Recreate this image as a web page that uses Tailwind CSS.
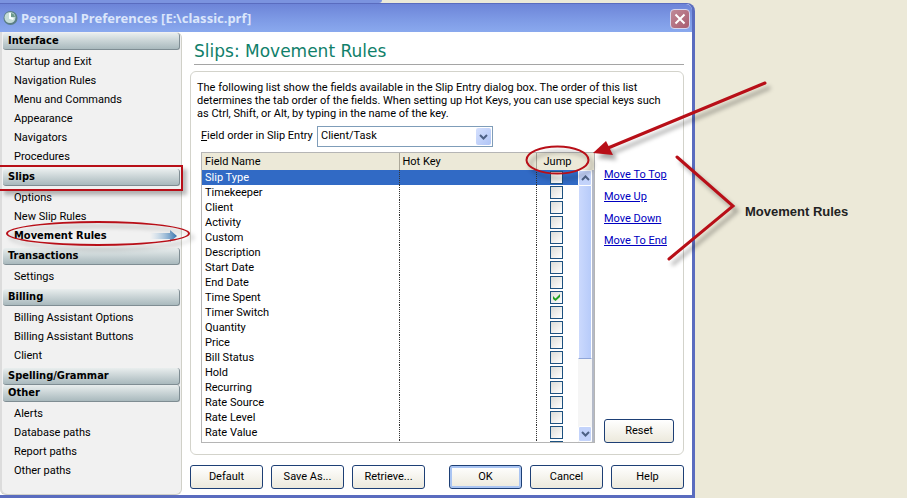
<!DOCTYPE html>
<html lang="en">
<head>
    <meta charset="UTF-8">
    <meta name="viewport" content="width=device-width, initial-scale=1.0">
    <title>Personal Preferences</title>
    <script src="https://cdn.jsdelivr.net/npm/@tailwindcss/browser@4"></script>
</head>
<body class="bg-[#ece9d8] font-[Roboto,sans-serif] text-[11px] text-black">

<div class="relative flex min-h-screen flex-col overflow-hidden">

    <!-- Edge of the window behind -->
    <div class="h-[3px] w-[382px] rounded-br bg-[#7b93df]"></div>

    <div class="flex flex-1">

        <!-- Dialog -->
        <div class="flex flex-1 flex-col rounded-tr-lg border-t border-r-[3px] border-b-[3px] border-[#5a6cbf] bg-white">

            <!-- Title bar -->
            <header class="flex h-7 items-center rounded-tr-md bg-linear-to-b from-[#6d84d8] via-[#7c98e4] to-[#8aa9ee] pr-[2px] pl-[3px]">
                <svg class="size-4" viewBox="0 0 16 16">
                    <circle cx="7.5" cy="8" r="7" fill="#5b7f86"/>
                    <circle cx="7" cy="7.500" r="5.500" fill="#c4dcd8"/>
                    <path d="M7 3v5l3.500 1" fill="none" stroke="#f8ffff" stroke-width="2"/>
                    <path d="M8 3a5 5 0 0 1 4 4l-4 0z" fill="#6d9a8c"/>
                </svg>
                <h1 class="ml-[2px] flex-1 pt-[2px] font-['Noto_Sans',sans-serif] text-[13px] font-bold text-[#dbe6fb]">Personal Preferences [E:\classic.prf]</h1>
                <button aria-label="Close" class="mt-[2px] grid size-5 place-items-center rounded-sm border border-[#d5d6ee] bg-linear-to-br from-[#c08a98] to-[#a95c70]">
                    <svg class="size-3" viewBox="0 0 12 12"><path d="M1.500 1.500l9 9M10.500 1.500l-9 9" stroke="#fff" stroke-width="2"/></svg>
                </button>
            </header>

            <div class="flex flex-1">

                <!-- Sidebar -->
                <nav class="w-[182px] rounded-r-md rounded-b-md border-r border-b border-[#d0d0c8] bg-[#f1f1f1] pt-px pr-px pb-3 pl-[3px] shadow-[inset_2px_0_0_#dcdcdc]">
                    <h2 class="h-[17px] rounded-[3px] border-r border-b border-[#7f8d93] bg-linear-to-b from-[#e9eeee] to-[#a9b9bd] pl-[5px] font-['DejaVu_Sans_Condensed','DejaVu_Sans',sans-serif] leading-4 font-bold">Interface</h2>
                    <ul class="mt-[2px] mb-[3px] pl-[11px] leading-[19px]">
                        <li><a href="#">Startup and Exit</a></li>
                        <li><a href="#">Navigation Rules</a></li>
                        <li><a href="#">Menu and Commands</a></li>
                        <li><a href="#">Appearance</a></li>
                        <li><a href="#">Navigators</a></li>
                        <li><a href="#">Procedures</a></li>
                    </ul>
                    <div class="relative">
                        <h2 class="h-[17px] rounded-[3px] border-r border-b border-[#7f8d93] bg-linear-to-b from-[#e9eeee] to-[#a9b9bd] pl-[5px] font-['DejaVu_Sans_Condensed','DejaVu_Sans',sans-serif] leading-4 font-bold">Slips</h2>
                        <!-- Highlight box -->
                        <div class="pointer-events-none absolute -top-1 -right-[3px] -bottom-[5px] -left-[3px] border-y-2 border-r-2 border-[#b80f18] shadow-[4px_4px_4px_#0004]"></div>
                    </div>
                    <ul class="mt-[2px] mb-[3px] pl-[11px] leading-[19px]">
                        <li><a href="#">Options</a></li>
                        <li><a href="#">New Slip Rules</a></li>
                        <li class="relative">
                            <a href="#" class="flex items-center justify-between pr-[2px] font-['DejaVu_Sans_Condensed','DejaVu_Sans',sans-serif] font-bold">
                                Movement Rules
                                <svg class="h-3 w-7" viewBox="0 0 28 12">
                                    <defs>
                                        <linearGradient id="fade"><stop offset="0" stop-color="#9cc4e4" stop-opacity="0"/><stop offset="1" stop-color="#3674b0"/></linearGradient>
                                    </defs>
                                    <path d="M0 3h20V0l7 6-7 6V9H0z" fill="url(#fade)"/>
                                </svg>
                            </a>
                            <div class="pointer-events-none absolute -top-[5px] -right-[10px] h-[25px] w-[184px] rounded-[50%] border-2 border-[#b80f18] drop-shadow-[4px_4px_2px_#0004]"></div>
                        </li>
                    </ul>
                    <h2 class="h-[17px] rounded-[3px] border-r border-b border-[#7f8d93] bg-linear-to-b from-[#e9eeee] to-[#a9b9bd] pl-[5px] font-['DejaVu_Sans_Condensed','DejaVu_Sans',sans-serif] leading-4 font-bold">Transactions</h2>
                    <ul class="mt-[2px] mb-[3px] pl-[11px] leading-[19px]">
                        <li><a href="#">Settings</a></li>
                    </ul>
                    <h2 class="h-[17px] rounded-[3px] border-r border-b border-[#7f8d93] bg-linear-to-b from-[#e9eeee] to-[#a9b9bd] pl-[5px] font-['DejaVu_Sans_Condensed','DejaVu_Sans',sans-serif] leading-4 font-bold">Billing</h2>
                    <ul class="mt-[2px] mb-[3px] pl-[11px] leading-[19px]">
                        <li><a href="#">Billing Assistant Options</a></li>
                        <li><a href="#">Billing Assistant Buttons</a></li>
                        <li><a href="#">Client</a></li>
                    </ul>
                    <h2 class="h-[17px] rounded-[3px] border-r border-b border-[#7f8d93] bg-linear-to-b from-[#e9eeee] to-[#a9b9bd] pl-[5px] font-['DejaVu_Sans_Condensed','DejaVu_Sans',sans-serif] leading-4 font-bold">Spelling/Grammar</h2>
                    <h2 class="h-[17px] rounded-[3px] border-r border-b border-[#7f8d93] bg-linear-to-b from-[#e9eeee] to-[#a9b9bd] pl-[5px] font-['DejaVu_Sans_Condensed','DejaVu_Sans',sans-serif] leading-4 font-bold">Other</h2>
                    <ul class="mt-[2px] pl-[11px] leading-[19px]">
                        <li><a href="#">Alerts</a></li>
                        <li><a href="#">Database paths</a></li>
                        <li><a href="#">Report paths</a></li>
                        <li><a href="#">Other paths</a></li>
                    </ul>
                </nav>

                <!-- Content -->
                <main class="flex flex-1 flex-col pr-2 pb-[6px] pl-2">
                    <h2 class="ml-1 border-b border-[#a5a5a5] pt-2 pb-[2px] font-['DejaVu_Sans',sans-serif] text-[17px] leading-[22px] text-[#10806a]">Slips: Movement Rules</h2>

                    <section class="mt-[6px] flex-1 rounded-md border border-[#d3d3cb] pt-[9px] pr-[9px] pb-[9px] pl-[10px]">
                        <p class="-ml-1 max-w-[470px] leading-[13px]">The following list show the fields available in the Slip Entry dialog box. The order of this list<br>determines the tab order of the fields. When setting up Hot Keys, you can use special keys such<br>as Ctrl, Shift, or Alt, by typing in the name of the key.</p>

                        <div class="mt-[6px] flex items-center">
                            <label for="order" class="w-[116px] whitespace-nowrap"><u>F</u>ield order in Slip Entry</label>
                            <div class="relative w-44">
                                <select id="order" class="block h-[21px] w-full appearance-none border border-[#7f9db9] bg-white pl-[3px]">
                                    <option>Client/Task</option>
                                </select>
                                <span class="pointer-events-none absolute top-[2px] right-[2px] grid h-[17px] w-[15px] place-items-center rounded-xs bg-linear-to-br from-[#d5e0fd] to-[#b0c5f6]">
                                    <svg class="h-[6px] w-[9px]" viewBox="0 0 9 6"><path d="M1 1l3.500 3.500L8 1" fill="none" stroke="#4d6185" stroke-width="2"/></svg>
                                </span>
                            </div>
                        </div>

                        <div class="mt-[5px] flex gap-[9px]">
                            <!-- Field list -->
                            <div class="relative h-[291px] flex-1 overflow-hidden border border-[#b5b5b5]">
                                <table class="w-full table-fixed border-collapse text-left">
                                    <thead class="bg-[#ece9d8]">
                                        <tr class="h-[17px] leading-[17px]">
                                            <th class="border-r border-[#aca899] pl-[3px] font-normal">Field Name</th>
                                            <th class="w-[137px] border-r border-[#aca899] pl-[3px] font-normal">Hot Key</th>
                                            <th class="w-[41px] pl-[7px] font-normal">Jump</th>
                                            <th class="w-[17px]"></th>
                                        </tr>
                                    </thead>
                                    <tbody id="fields"></tbody>
                                </table>
                                <!-- Scroll bar -->
                                <div class="absolute top-[17px] right-0 bottom-0 flex w-4 flex-col border-r-2 border-[#b4bac8] bg-[#f5f5f5]">
                                    <span class="grid h-4 place-items-center rounded-xs border border-white bg-[#c3d3fb]">
                                        <svg class="h-[6px] w-[9px]" viewBox="0 0 9 6"><path d="M1 5l3.500-3.500L8 5" fill="none" stroke="#4d6185" stroke-width="2"/></svg>
                                    </span>
                                    <span class="h-[173px] border-x border-b border-x-white border-b-[#8fa5d8] bg-linear-to-r from-[#cbd9fd] to-[#b7cbfa]"></span>
                                    <span class="mt-auto grid h-4 place-items-center rounded-xs border border-white bg-[#c3d3fb]">
                                        <svg class="h-[6px] w-[9px]" viewBox="0 0 9 6"><path d="M1 1l3.500 3.500L8 1" fill="none" stroke="#4d6185" stroke-width="2"/></svg>
                                    </span>
                                </div>
                            </div>

                            <div class="flex w-[70px] flex-col pt-3 leading-[22px] whitespace-nowrap">
                                <a href="#" class="text-[#0000c0] underline">Move To Top</a>
                                <a href="#" class="text-[#0000c0] underline">Move Up</a>
                                <a href="#" class="text-[#0000c0] underline">Move Down</a>
                                <a href="#" class="text-[#0000c0] underline">Move To End</a>
                                <button class="mt-auto h-6 rounded-[3px] border border-[#1d3f75] bg-linear-to-b from-white to-[#ece9dc] leading-[22px]">Reset</button>
                            </div>
                        </div>
                    </section>

                    <div class="mt-[10px] flex gap-2">
                        <button class="h-6 w-[73px] rounded-[3px] border border-[#1d3f75] bg-linear-to-b from-white to-[#ece9dc]">Default</button>
                        <button class="h-6 w-[73px] rounded-[3px] border border-[#1d3f75] bg-linear-to-b from-white to-[#ece9dc]">Save As...</button>
                        <button class="h-6 w-[73px] rounded-[3px] border border-[#1d3f75] bg-linear-to-b from-white to-[#ece9dc]">Retrieve...</button>
                        <button class="ml-auto h-6 w-[73px] rounded-[3px] border border-[#1d3f75] bg-linear-to-b from-white to-[#ece9dc] shadow-[inset_0_0_0_2px_#a9c4f2]">OK</button>
                        <button class="h-6 w-[73px] rounded-[3px] border border-[#1d3f75] bg-linear-to-b from-white to-[#ece9dc]">Cancel</button>
                        <button class="h-6 w-[73px] rounded-[3px] border border-[#1d3f75] bg-linear-to-b from-white to-[#ece9dc]">Help</button>
                    </div>
                </main>
            </div>
        </div>

        <!-- Callout text -->
        <aside class="w-[212px] pt-[200px] pl-[50px] font-['Liberation_Sans',Arial,sans-serif] text-[13px] leading-[18px] font-bold text-[#222]">Movement Rules</aside>
    </div>

    <!-- Callout lines, anchored to the right edge like the list they point at -->
    <svg class="pointer-events-none absolute top-0 right-0 h-[300px] w-[407px] drop-shadow-[4px_5px_2px_#0005]" viewBox="500 0 407 300" fill="none" stroke="#b80f18">
        <ellipse cx="557.500" cy="160" rx="31" ry="13.500" stroke-width="2"/>
        <path d="M765 83L608 148" stroke-width="3" stroke-linecap="round"/>
        <path d="M593 153l13-12 7 14z" fill="#b80f18" stroke="none"/>
        <path d="M677 157l56 49-64 53" stroke-width="3" stroke-linecap="round"/>
    </svg>
</div>

<script>
    const fields = ['Slip Type', 'Timekeeper', 'Client', 'Activity', 'Custom', 'Description', 'Start Date', 'End Date',
        'Time Spent', 'Timer Switch', 'Quantity', 'Price', 'Bill Status', 'Hold', 'Recurring', 'Rate Source',
        'Rate Level', 'Rate Value', ''];
    const selected = 'Slip Type';
    const jumps = ['Time Spent'];

    document.getElementById('fields').innerHTML = fields.map(name => `
        <tr class="h-[15px] leading-[15px] ${name === selected ? 'bg-[#316ac5] text-white' : ''}">
            <td class="border-r border-dotted border-[#333] p-0 pl-[3px]">${name}</td>
            <td class="border-r border-dotted border-[#333] p-0"></td>
            <td class="p-0">
                <label class="relative mx-auto block size-[13px]">
                    <input type="checkbox" aria-label="Jump ${name}" ${jumps.includes(name) ? 'checked' : ''} class="peer block size-[13px] appearance-none border border-[#1c5180] bg-linear-to-br from-[#dcdcd7] to-white">
                    <svg class="absolute top-[3px] left-[3px] hidden size-[7px] peer-checked:block" viewBox="0 0 7 7"><path d="M0 2v3l2.500 2L7 3V0L2.500 4.500z" fill="#21a121"/></svg>
                </label>
            </td>
            <td class="p-0"></td>
        </tr>`).join('');
</script>
</body>
</html>
